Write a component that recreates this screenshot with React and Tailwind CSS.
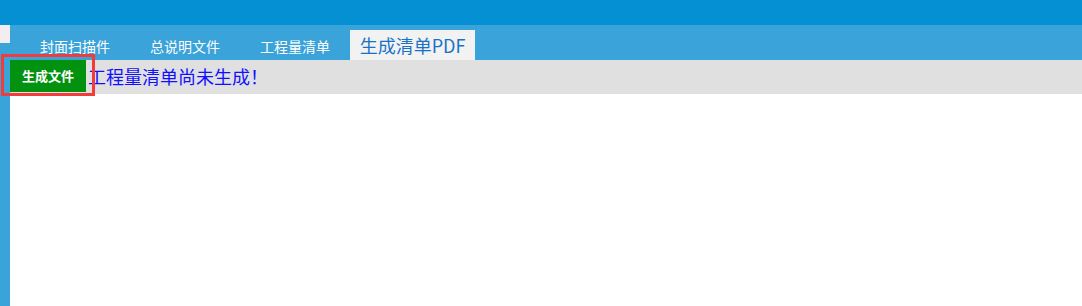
import React from 'react';

const tabs = ['封面扫描件', '总说明文件', '工程量清单'];

export default function App() {
    return (
        <div className="relative w-[1082px] h-[306px] bg-white overflow-hidden" style={{ fontFamily: '"Microsoft YaHei", "Noto Sans CJK SC", sans-serif' }}>
            {/* top bar */}
            <div className="h-[25px] bg-[#0590d3]" />
            <div className="flex h-[281px]">
                {/* left strip */}
                <div className="w-[10px] flex flex-col bg-[#3aa3da]">
                    <div className="h-[18px] bg-[#f2eef0]" />
                </div>
                <div className="flex-1 flex flex-col">
                    {/* tab bar */}
                    <div className="h-[35px] bg-[#3aa3da] flex items-end pl-[10px]">
                        {tabs.map(t => (
                            <div key={t} className="w-[110px] h-[30px] flex items-center justify-center text-[14px] text-white pt-[2px]">
                                {t}
                            </div>
                        ))}
                        <div className="w-[125px] h-[30px] bg-[#f2f2f2] flex items-center justify-center text-[18px] text-[#1a72c6]">
                            生成清单PDF
                        </div>
                    </div>
                    {/* action bar */}
                    <div className="h-[34px] bg-[#e0e0e0] flex items-start">
                        <button className="w-[76px] h-[32px] bg-[#03920f] text-white text-[13px] font-bold flex items-center justify-center">
                            生成文件
                        </button>
                        <span className="ml-[2px] mt-[3px] text-[18px] leading-[26px] text-[#1010ff]">工程量清单尚未生成！</span>
                    </div>
                    <div className="flex-1 bg-white" />
                </div>
            </div>
            {/* red highlight box */}
            <div className="absolute left-[1px] top-[54px] w-[94px] h-[42px] border-[3px] border-[#f23b3b] pointer-events-none" />
        </div>
    );
}
